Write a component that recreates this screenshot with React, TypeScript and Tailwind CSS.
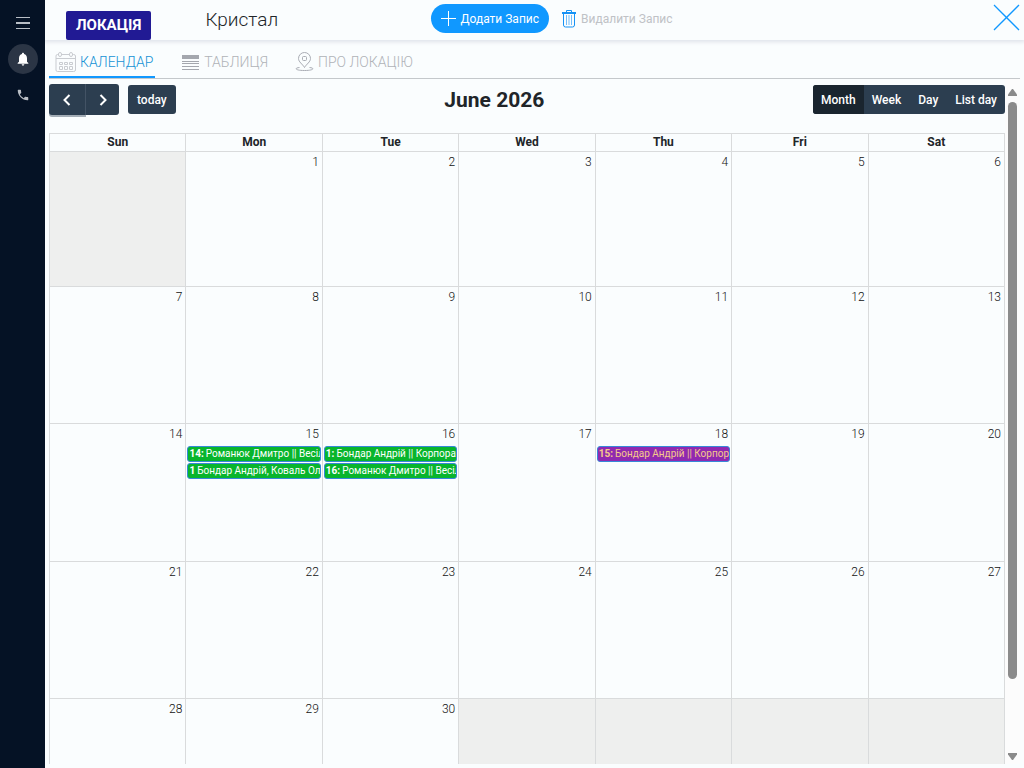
import React from 'react';
import { MdNotifications, MdPhone } from 'react-icons/md';

type CalendarEvent = {
  time: string;
  title: string;
  color: string;
};

const GREEN = 'bg-[#08b52c] text-white';
const PURPLE = 'bg-[#9029b0] text-[#f5c98a]';

const weekDays = ['Sun', 'Mon', 'Tue', 'Wed', 'Thu', 'Fri', 'Sat'];

const weeks: (number | null)[][] = [
  [null, 1, 2, 3, 4, 5, 6],
  [7, 8, 9, 10, 11, 12, 13],
  [14, 15, 16, 17, 18, 19, 20],
  [21, 22, 23, 24, 25, 26, 27],
  [28, 29, 30, null, null, null, null],
];

const events: Record<number, CalendarEvent[]> = {
  15: [
    { time: '14:', title: 'Романюк Дмитро || Весіл', color: GREEN },
    { time: '1', title: 'Бондар Андрій, Коваль Ол', color: GREEN },
  ],
  16: [
    { time: '1:', title: 'Бондар Андрій || Корпорат', color: GREEN },
    { time: '16:', title: 'Романюк Дмитро || Весіл', color: GREEN },
  ],
  18: [{ time: '15:', title: 'Бондар Андрій || Корпор', color: PURPLE }],
};

const CalendarIcon = () => (
  <svg width="22" height="22" viewBox="0 0 22 22" fill="none" stroke="#c9ccd1">
    <path d="M3 3.5H2.5Q1 3.5 1 5V19Q1 20.500 2.500 20.500H18.500Q20.500 20.500 20.500 19V5Q20.500 3.500 18.500 3.500H18M7 3.500H14M1 7.500H20" />
    <rect x="3.500" y="1.500" width="3" height="4" rx="1.500" />
    <rect x="14.500" y="1.500" width="3" height="4" rx="1.500" />
    <path d="M9.500 11.500h3v2h-3zM14.500 11.500h3v2h-3zM4.500 15.500h3v3h-3zM9.500 15.500h3v3h-3zM14.500 15.500h3v3h-3zM4.500 11.500h3v2h-3z" />
  </svg>
);

const TableIcon = () => (
  <svg width="17" height="15" viewBox="0 0 17 15" fill="#a4a7ae">
    <path d="M0 0h17v4H0zM0 6h17v1H0zM0 8h17v1H0zM0 11h17v1H0zM0 14h17v1H0z" />
  </svg>
);

const PinIcon = () => (
  <svg width="20" height="20" viewBox="0 0 20 20" fill="none" stroke="#a9acb4">
    <path d="M9.500 15.500C7.500 12 3.500 10 3.500 6.500A6 6 0 0 1 15.500 6.500C15.500 10 11.500 12 9.500 15.500Z" />
    <rect x="7.500" y="4.500" width="4" height="4" rx="1" />
    <path d="M4.500 15.500C-1 16 0 18.500 9.500 18.500S20 16 14.500 15.500" />
  </svg>
);

const TrashIcon = () => (
  <svg width="14" height="18" viewBox="0 0 14 18" fill="none" stroke="#1592f5">
    <path d="M4.500 2V.5H9.500V2" />
    <path d="M0 3H14" strokeWidth="2" />
    <path d="M1.500 4V15Q1.500 17 3.500 17H10.500Q12.500 17 12.500 15V4" />
    <path d="M4.500 5V15M7 5V15M9.500 5V15" stroke="#73bdf9" />
  </svg>
);

const Sidebar = () => (
  <aside className="w-[45px] shrink-0 bg-[#051225] flex flex-col items-center pt-[8px] text-[#b9bec6]">
    <button aria-label="Menu" className="w-[30px] h-[30px] flex items-center justify-center">
      <svg width="14" height="12" viewBox="0 0 14 12" fill="currentColor">
        <path d="M0 0h14v1H0zM0 5h14v2H0zM0 11h14v1H0z" />
      </svg>
    </button>
    <button aria-label="Notifications" className="mt-[6px] w-[30px] h-[30px] rounded-full bg-[#2b3545] text-white flex items-center justify-center">
      <MdNotifications className="w-4 h-4" />
    </button>
    <button aria-label="Phone" className="mt-[6px] w-[30px] h-[30px] flex items-center justify-center">
      <MdPhone className="w-[14px] h-[14px]" />
    </button>
  </aside>
);

const Header = () => (
  <header className="h-[40px] shrink-0 flex items-start justify-between pl-[21px] pr-[4px] shadow-[0_1px_4px_1px_#dfe2ea]">
    <div className="flex flex-1">
      <span className="mt-[11px] h-[29px] px-[10px] rounded-[2px] bg-[#211a94] text-white text-[15px] leading-[28px] font-bold">ЛОКАЦІЯ</span>
      <h1 className="ml-[54px] mt-[6px] text-[19px] leading-[28px] font-light text-[#212529]">Кристал</h1>
    </div>
    <div className="flex items-center mt-[4px] pl-[18px] gap-[13px] text-[12px]">
      <button className="h-[29px] rounded-full bg-[#1098ff] text-white flex items-center pl-[10px] pr-[10px] gap-[4px]">
        <svg width="15" height="15" viewBox="0 0 15 15" fill="none" stroke="currentColor">
          <path d="M7.500 0V15M0 7.500H15" />
        </svg>
        <span>Додати Запис</span>
      </button>
      <button className="flex items-center gap-[5px] text-[#bfc2c6]">
        <TrashIcon />
        <span>Видалити Запис</span>
      </button>
    </div>
    <div className="flex flex-1 justify-end">
      <button aria-label="Close" className="mt-[4px] text-[#1098ff]">
        <svg width="27" height="27" viewBox="0 0 27 27" fill="none" stroke="currentColor" strokeWidth="1.300">
          <path d="M1 1L26 26" />
          <path d="M26 1L1 26" />
        </svg>
      </button>
    </div>
  </header>
);

const Tabs = () => (
  <nav className="h-[39px] shrink-0 mx-[4px] pt-[8px] border-b border-[#c4c8cb] flex items-stretch gap-[21px] text-[14px] font-light text-[#b0b3b8]">
    <a href="#calendar" className="flex items-center gap-[3px] pl-[6px] pr-[2px] border-b-2 border-[#1098ff] text-[#1592d5]">
      <CalendarIcon />
      КАЛЕНДАР
    </a>
    <a href="#table" className="flex items-center gap-[5px] pl-[6px] pr-[4px] pb-[2px]">
      <TableIcon />
      ТАБЛИЦЯ
    </a>
    <a href="#about" className="flex items-center gap-[3px] pl-[2px] pb-[2px]">
      <PinIcon />
      ПРО ЛОКАЦІЮ
    </a>
  </nav>
);

const Toolbar = () => (
  <div className="flex items-start justify-between h-[54px] pt-[5px] text-[12px] text-white font-medium">
    <div className="flex items-start">
      <button aria-label="Previous" className="w-[37px] h-[31px] rounded-l-[3px] bg-[#2c3e50] border-r border-[#435365] shadow-[0_2px_0_#a3adb6] flex items-center justify-center">
        <svg width="8" height="12" viewBox="0 0 8 12" fill="none" stroke="currentColor" strokeWidth="2">
          <path d="M6.500 1L1.500 6L6.500 11" />
        </svg>
      </button>
      <button aria-label="Next" className="w-[33px] h-[31px] rounded-r-[3px] bg-[#2c3e50] flex items-center justify-center">
        <svg width="8" height="12" viewBox="0 0 8 12" fill="none" stroke="currentColor" strokeWidth="2">
          <path d="M1.500 1L6.500 6L1.500 11" />
        </svg>
      </button>
      <button className="ml-[9px] mt-px h-[29px] px-[9px] rounded-[3px] bg-[#2c3e50]">today</button>
    </div>
    <h2 className="text-[21px] leading-[32px] font-bold text-[#212529]">June 2026</h2>
    <div className="mt-px flex h-[29px] rounded-[3px] overflow-hidden bg-[#2c3e50]">
      <button className="px-[8px] bg-[#1a252f]">Month</button>
      <button className="px-[8px]">Week</button>
      <button className="px-[9px]">Day</button>
      <button className="px-[8px]">List day</button>
    </div>
  </div>
);

const EventItem = ({ event }: { event: CalendarEvent }) => (
  <a
    href="#event"
    className={`flex items-center h-[16px] mb-px pl-px gap-[2px] rounded-[3px] border border-[#3788d8] overflow-hidden whitespace-nowrap text-[10px] leading-[14px] ${event.color}`}
  >
    <span className="font-bold">{event.time}</span>
    <span>{event.title}</span>
  </a>
);

const MonthGrid = () => (
  <table className="w-full table-fixed border-collapse text-[#212529]">
    <thead>
      <tr className="h-[18px]">
        {weekDays.map((day) => (
          <th key={day} className="border border-[#d9dbdc] p-0 text-[12px] leading-[17px] font-bold">{day}</th>
        ))}
      </tr>
    </thead>
    <tbody>
      {weeks.map((week, i) => (
        <tr key={i} className="h-[137px] first:h-[135px] nth-3:h-[138px]">
          {week.map((day, j) => (
            <td key={j} className={`border border-[#d9dbdc] p-0 align-top ${day ? '' : 'bg-[#eeefee]'}`}>
              {day && (
                <>
                  <div className="pr-[3px] pt-px text-right text-[12px] leading-[18px] font-light text-[#111]">{day}</div>
                  <div className="px-px pt-[3px]">
                    {events[day]?.map((event) => <EventItem key={event.title} event={event} />)}
                  </div>
                </>
              )}
            </td>
          ))}
        </tr>
      ))}
    </tbody>
  </table>
);

const ScrollBar = () => (
  <div className="w-[15px] shrink-0 pt-[10px] pb-[4px] flex flex-col items-center bg-[#fcfcfc] text-[#8b8b8b]">
    <svg width="9" height="7" viewBox="0 0 9 7" fill="currentColor">
      <path d="M4 0h1L9 5.500V7H0V5.500z" />
    </svg>
    <div className="mt-[6px] w-[9px] basis-[86%] rounded-full bg-current" />
    <svg className="mt-auto" width="9" height="7" viewBox="0 0 9 7" fill="currentColor">
      <path d="M4 7h1L9 1.500V0H0V1.500z" />
    </svg>
  </div>
);

const App = () => {
  return (
    <div className="flex h-screen overflow-hidden bg-[#fafdfe] font-[Roboto,sans-serif]">
      <Sidebar />
      <main className="flex-1 min-w-0 flex flex-col overflow-hidden">
        <Header />
        <Tabs />
        <div className="flex flex-1 min-h-0 px-[4px] mb-[4px]">
          <div className="flex-1 min-w-0 overflow-hidden">
            <Toolbar />
            <MonthGrid />
          </div>
          <ScrollBar />
        </div>
      </main>
    </div>
  );
};

export default App;
